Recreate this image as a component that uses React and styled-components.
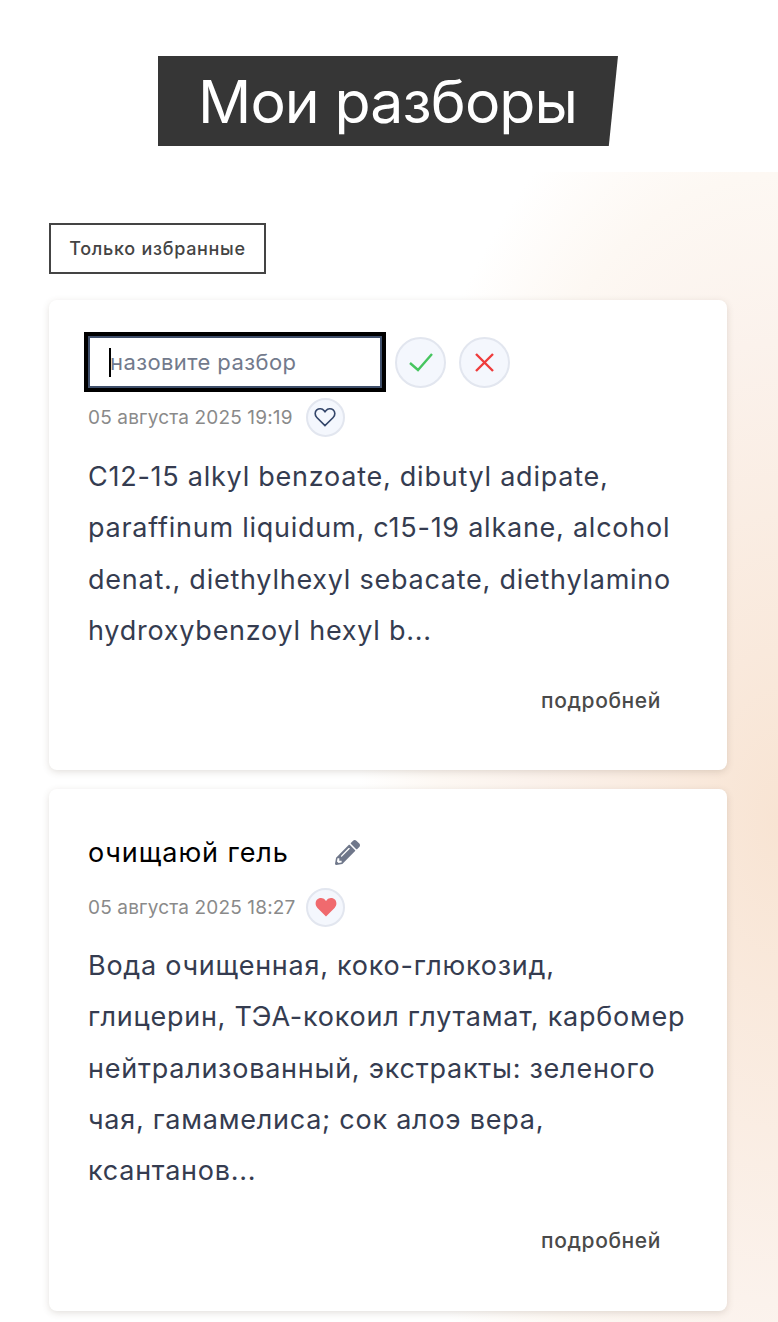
import React from "react";
import styled, { createGlobalStyle } from "styled-components";
import { FaPencilAlt } from "react-icons/fa";

const FONT = `Inter, "Noto Sans", sans-serif`;
const Global = createGlobalStyle`
  html, body { margin: 0; padding: 0; background: #fff; }
  body { font-family: ${FONT}; }
`;
const Page = styled.div`
  width: 778px; height: 1322px; overflow: hidden; display: flex; flex-direction: column;
`;
const Header = styled.header`
  height: 172px; padding-top: 56px; box-sizing: border-box; display: flex; justify-content: center; flex: none;
`;
const Title = styled.h1`
  margin: 0 0 0 -2px; width: 460px; height: 90px; box-sizing: border-box; padding-left: 40px;
  background: #363636; color: #fff; font-size: 59px; font-weight: 400; line-height: 92px; letter-spacing: -0.9px;
  clip-path: polygon(0 0, 100% 0, 98% 100%, 0 100%);
  white-space: nowrap;
`;
const Main = styled.main`
  flex: 1; padding: 51px 51px 0 49px; display: flex; flex-direction: column; align-items: flex-start;
  background: radial-gradient(ellipse 420px 800px at 100% 650px, #f8e4d3 0%, #fbf2ec 60%, #fdf8f3 81%, #fff 100%);
`;
const Filter = styled.button`
  width: 217px; height: 51px; box-sizing: border-box; border: 2px solid #444; background: #fff; color: #444;
  font: 500 18px ${FONT}; letter-spacing: 0.7px; padding: 0; margin-bottom: 26px;
`;
const Card = styled.article`
  width: 678px; height: ${p => p.$h}px; box-sizing: border-box; background: #fff; border-radius: 8px;
  box-shadow: 0 2px 7px rgba(90, 70, 55, .17); padding: ${p => p.$top}px 39px 0; margin-bottom: 19px; flex: none;
  display: flex; flex-direction: column;
`;
const EditRow = styled.div`
  display: flex; align-items: center; margin-left: -4px; height: 60px;
`;
const NameInput = styled.div`
  width: 302px; height: 60px; box-sizing: border-box; border: 4px solid #000;
  padding: 0 0 0 21px; display: flex; align-items: center; background: #fff; margin-right: 9px;
  box-shadow: inset 0 0 0 2px #3f4f6b;
  color: #727a8c; font-size: 22px; letter-spacing: 0.4px;
`;
const Caret = styled.span`
  width: 2px; height: 29px; background: #000; margin-right: -1px; flex: none;
`;
const ActionGroup = styled.div`
  display: flex; gap: 13px;
`;
const Circle = styled.button`
  width: ${p => p.$size}px; height: ${p => p.$size}px; border-radius: 50%; border: 2px solid #e2e6ef; background: #f4f7fd;
  padding: 0; display: flex; align-items: center; justify-content: center; flex: none;
`;
const Name = styled.div`
  display: flex; align-items: center; height: 52px; gap: 46px; color: #000; font-size: 27px; letter-spacing: 0.9px;
`;
const PencilIcon = styled(FaPencilAlt)`
  width: 25px; height: 25px; color: #6f778a; flex: none;
`;
const MetaRow = styled.div`
  display: flex; align-items: center; gap: ${p => p.$gap}px; height: 38px; margin-top: ${p => p.$mt}px; color: #8a8a8a; font-size: 19px; letter-spacing: 0.15px;
`;
const Body = styled.p`
  margin: ${p => p.$mt}px 0 0; color: #353c50; font-size: 27px; line-height: 51.3px; letter-spacing: 0.75px;
`;
const More = styled.a`
  align-self: flex-end; margin: ${p => p.$mt}px 27px 0 0; color: #4a4a4a; font-size: 21px; font-weight: 500; letter-spacing: 0.6px;
`;

const HeartOutline = () => (
  <svg width="22" height="20" viewBox="0 0 24 22" fill="none" stroke="#34466a" strokeWidth="1.8">
    <path d="M12 20.5 3 11.5C.5 9 .7 5.2 3 3.2c2.4-2 6-1.6 7.8.6L12 5.2l1.2-1.4c1.8-2.2 5.4-2.6 7.8-.6 2.3 2 2.5 5.8 0 8.3z" />
  </svg>
);
const HeartFull = () => (
  <svg width="22" height="20" viewBox="0 0 24 22" fill="#f06a6e">
    <path d="M12 21.5 2.6 12C-.3 9 .1 4.8 2.6 2.6c2.7-2.3 6.5-1.7 8.4.6l1 1.2 1-1.2c1.900-2.300 5.700-2.900 8.400-.6 2.500 2.200 2.900 6.400 0 9.400z" />
  </svg>
);
const Check = () => (
  <svg width="26" height="20" viewBox="0 0 26 20" fill="none" stroke="#46c55f" strokeWidth="2.4"><path d="M2 11l8 7L24 2" /></svg>
);
const Cross = () => (
  <svg width="21" height="21" viewBox="0 0 21 21" fill="none" stroke="#ee3c3c" strokeWidth="2.4"><path d="M2 2l17 17M19 2 2 19" /></svg>
);

export default function App() {
  return (
    <Page>
      <Global />
      <Header><Title>Мои разборы</Title></Header>
      <Main>
        <Filter>Только избранные</Filter>
        <Card $h={470} $top={32}>
          <EditRow>
            <NameInput><Caret />назовите разбор</NameInput>
            <ActionGroup>
              <Circle $size={51}><Check /></Circle>
              <Circle $size={51}><Cross /></Circle>
            </ActionGroup>
          </EditRow>
          <MetaRow $mt={6} $gap={13}>05 августа 2025 19:19<Circle $size={39}><HeartOutline /></Circle></MetaRow>
          <Body $mt={15}>C12-15 alkyl benzoate, dibutyl adipate, paraffinum liquidum, c15-19 alkane, alcohol denat., diethylhexyl sebacate, diethylamino hydroxybenzoyl hexyl b...</Body>
          <More $mt={32}>подробней</More>
        </Card>
        <Card $h={522} $top={37}>
          <Name>очищаюй гель<PencilIcon /></Name>
          <MetaRow $mt={10} $gap={11}>05 августа 2025 18:27<Circle $size={39}><HeartFull /></Circle></MetaRow>
          <Body $mt={14}>Вода очищенная, коко-глюкозид, глицерин, ТЭА-кокоил глутамат, карбомер нейтрализованный, экстракты: зеленого чая, гамамелиса; сок алоэ вера, ксантанов...</Body>
          <More $mt={32}>подробней</More>
        </Card>
      </Main>
    </Page>
  );
}
